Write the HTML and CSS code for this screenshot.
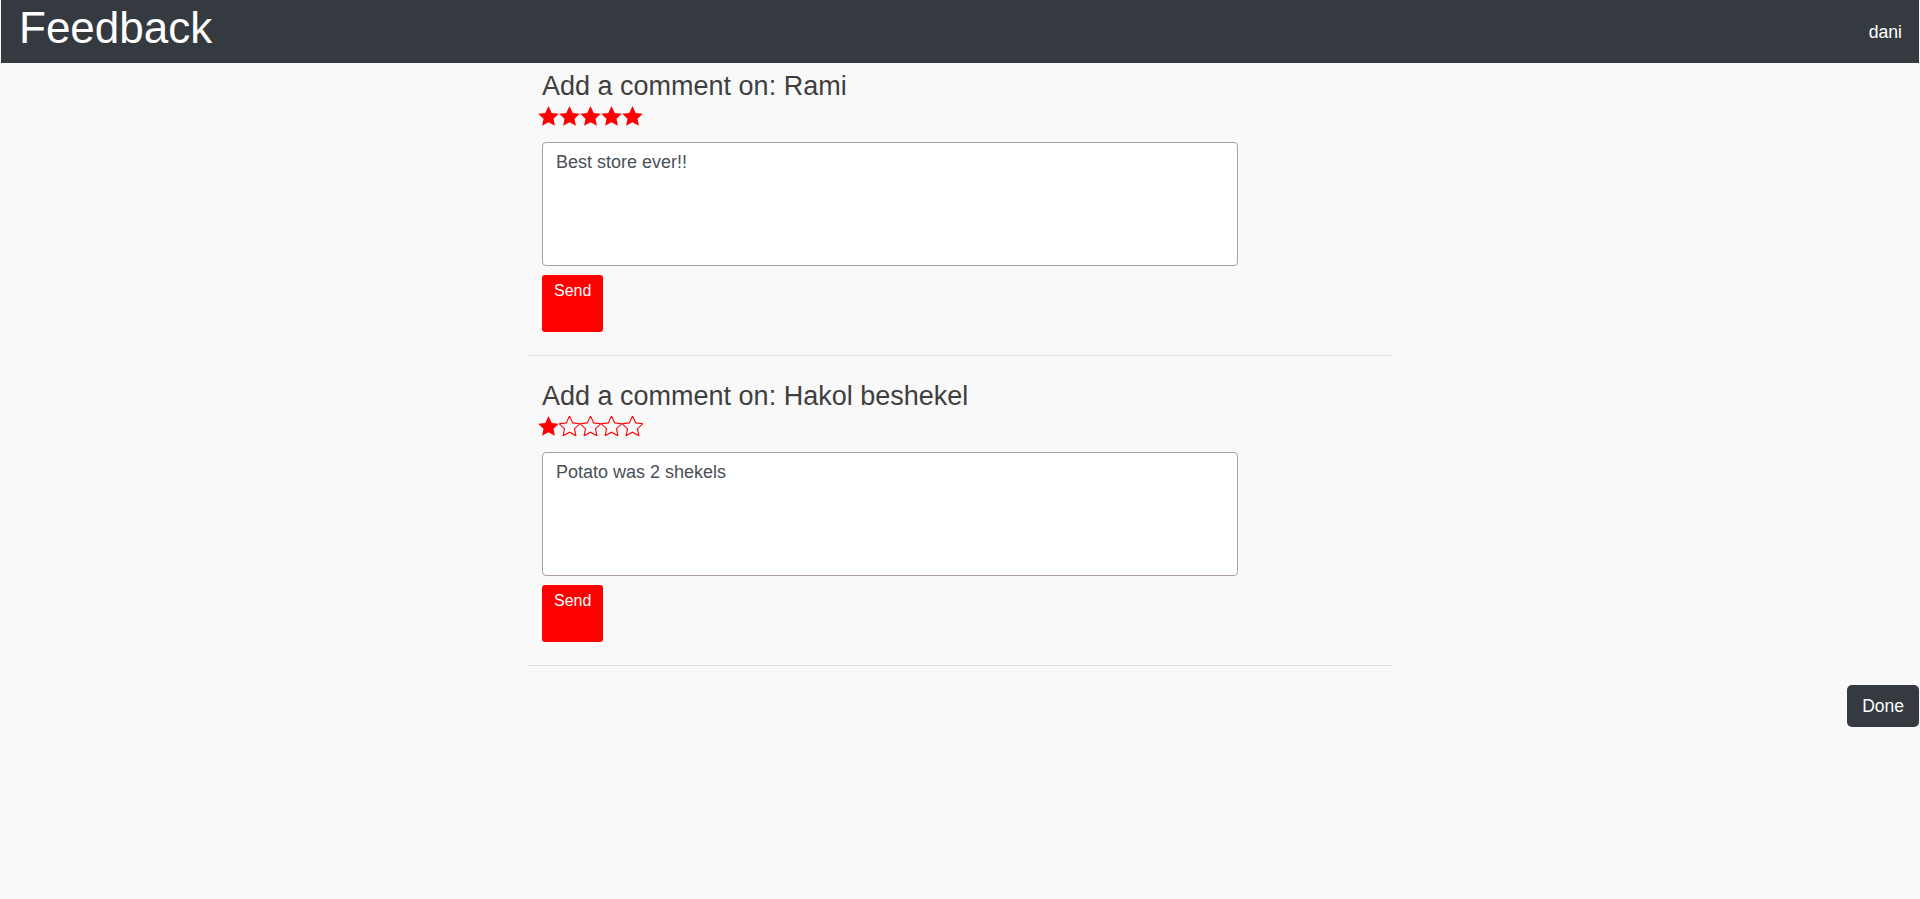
FILE: index.html
```html
<!DOCTYPE html>
<html lang="en">
<head>
<meta charset="utf-8">
<title>Feedback</title>
<link rel="stylesheet" href="styles.css">
</head>
<body>
<svg class="defs" width="0" height="0" aria-hidden="true">
  <defs>
    <symbol id="star" viewBox="1.5 1.5 21 20">
      <polygon points="12,1.6 15.2,8.4 22.3,9.3 17,14.2 18.4,21.3 12,17.7 5.6,21.3 7,14.2 1.7,9.3 8.8,8.4"/>
    </symbol>
  </defs>
</svg>
<header class="navbar">
  <div class="brand">Feedback</div>
  <div class="user">dani</div>
</header>
<main class="feed">
  <section class="comment">
    <h2 class="comment-title">Add a comment on: Rami</h2>
    <div class="stars" aria-label="5 of 5 stars">
      <svg class="star full"><use href="#star"/></svg>
      <svg class="star full"><use href="#star"/></svg>
      <svg class="star full"><use href="#star"/></svg>
      <svg class="star full"><use href="#star"/></svg>
      <svg class="star full"><use href="#star"/></svg>
    </div>
    <textarea class="comment-box">Best store ever!!</textarea>
    <button class="send-btn">Send</button>
    <div class="divider"></div>
  </section>
  <section class="comment">
    <h2 class="comment-title">Add a comment on: Hakol beshekel</h2>
    <div class="stars" aria-label="1 of 5 stars">
      <svg class="star full"><use href="#star"/></svg>
      <svg class="star empty"><use href="#star"/></svg>
      <svg class="star empty"><use href="#star"/></svg>
      <svg class="star empty"><use href="#star"/></svg>
      <svg class="star empty"><use href="#star"/></svg>
    </div>
    <textarea class="comment-box">Potato was 2 shekels</textarea>
    <button class="send-btn">Send</button>
    <div class="divider"></div>
  </section>
</main>
<div class="actions">
  <button class="done-btn">Done</button>
</div>
</body>
</html>
```

FILE: styles.css
```css
html, body {
  margin: 0;
  background: #f9f9f9;
}
body {
  padding: 0 1px;
  font-family: "Liberation Sans", Arial, sans-serif;
  color: #444;
}
.defs {
  position: absolute;
  width: 0;
  height: 0;
  overflow: hidden;
}
.navbar {
  height: 63px;
  box-sizing: border-box;
  background: #343a40;
  display: flex;
  justify-content: space-between;
  align-items: flex-start;
  padding: 2px 17px 0 18px;
  color: #fff;
}
.brand {
  font-size: 44px;
  line-height: 52px;
}
.user {
  font-size: 17.6px;
  line-height: 20px;
  margin-top: 20px;
}
.feed {
  width: 866px;
  margin: 0 auto;
}
.comment {
  display: flex;
  flex-direction: column;
  align-items: flex-start;
}
.comment-title {
  margin: 7px 0 0 15px;
  font-size: 27px;
  line-height: 32px;
  font-weight: normal;
  color: #3f3f3f;
}
.stars {
  display: flex;
  margin: 0 0 10px 11px;
  padding-top: 4px;
  height: 26px;
}
.star {
  width: 21px;
  height: 20px;
}
.star.full {
  fill: #ff0000;
}
.star.empty {
  fill: none;
  stroke: #ff0000;
  stroke-width: 1.1;
}
.comment-box {
  display: block;
  margin-left: 15px;
  width: 696px;
  height: 124px;
  box-sizing: border-box;
  padding: 6px 13px;
  border: 1px solid #ad9fa4;
  border-radius: 4px;
  background: #fff;
  font-family: "Liberation Sans", Arial, sans-serif;
  font-size: 18px;
  line-height: 26px;
  color: #495057;
  resize: none;
}
.send-btn {
  margin: 9px 0 0 15px;
  height: 57px;
  box-sizing: border-box;
  padding: 4px 12px 0;
  border: none;
  border-radius: 3px;
  background: #ff0000;
  color: #fff;
  font-family: "Liberation Sans", Arial, sans-serif;
  font-size: 16px;
  line-height: 24px;
  display: flex;
  align-items: flex-start;
}
.divider {
  align-self: stretch;
  margin: 23px 0 17px;
  border-top: 1px solid #dedede;
}
.comment:last-child .divider {
  margin-bottom: 0;
}
.actions {
  display: flex;
  justify-content: flex-end;
  margin-top: 19px;
}
.done-btn {
  height: 42px;
  padding: 0 15px;
  border: none;
  border-radius: 5px;
  background: #343a40;
  color: #fff;
  font-family: "Liberation Sans", Arial, sans-serif;
  font-size: 17.5px;
  line-height: 42px;
}
```
